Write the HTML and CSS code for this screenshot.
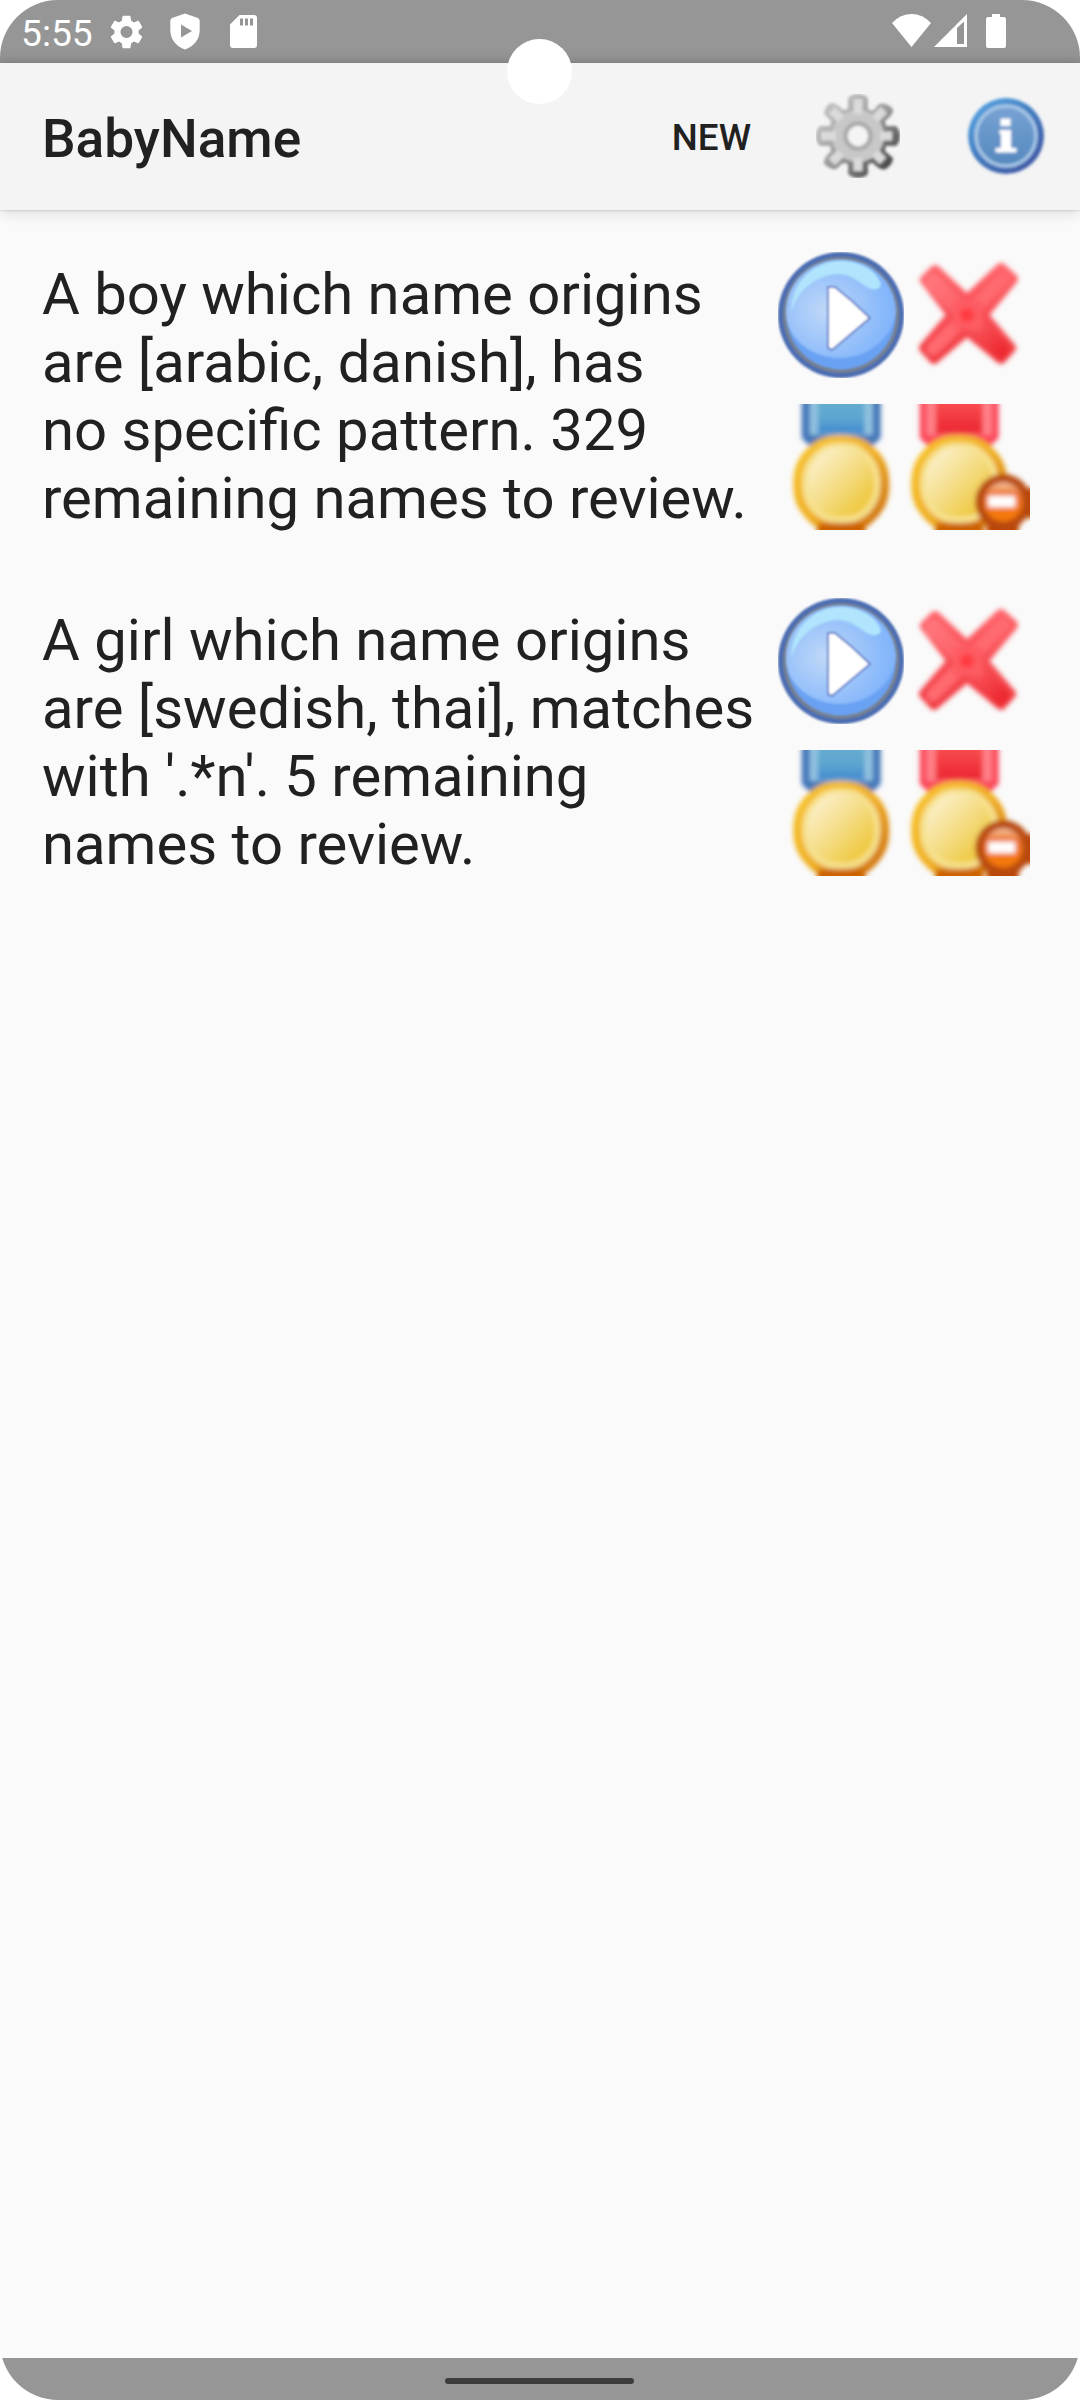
FILE: index.html
```html
<!DOCTYPE html>
<html lang="en">
<head>
<meta charset="utf-8">
<title>BabyName</title>
<link rel="stylesheet" href="styles.css">
</head>
<body>
<svg class="defs" aria-hidden="true">
  <defs>
    <filter id="soft" x="-10%" y="-10%" width="120%" height="120%"><feGaussianBlur stdDeviation="2.400"/></filter>
    <filter id="soft-xs" x="-10%" y="-10%" width="120%" height="120%"><feGaussianBlur stdDeviation="0.8"/></filter>
    <filter id="soft-s" x="-10%" y="-10%" width="120%" height="120%"><feGaussianBlur stdDeviation="1.4"/></filter>
    <radialGradient id="playFill" cx="0.36" cy="0.52" r="0.6"><stop offset="0" stop-color="#bfd8f8"/><stop offset="1" stop-color="#82b5fb"/></radialGradient>
    <linearGradient id="crossFill" x1="0" y1="0" x2="1" y2="1"><stop offset="0" stop-color="#ff747a"/><stop offset="0.6" stop-color="#fb5a60"/><stop offset="1" stop-color="#ee2b33"/></linearGradient>
    <linearGradient id="crossEdge" gradientUnits="userSpaceOnUse" x1="63" y1="10" x2="63" y2="116"><stop offset="0" stop-color="#ff666c"/><stop offset="1" stop-color="#f0363d"/></linearGradient>
    <linearGradient id="goldEdge" x1="0" y1="0" x2="1" y2="1"><stop offset="0" stop-color="#f8c52a"/><stop offset="0.5" stop-color="#f0b020"/><stop offset="0.78" stop-color="#d98410"/><stop offset="1" stop-color="#c65a00"/></linearGradient>
    <linearGradient id="goldFill" x1="0" y1="0" x2="1" y2="1"><stop offset="0.1" stop-color="#fbf0cc"/><stop offset="0.5" stop-color="#f4dc84"/><stop offset="0.8" stop-color="#f0cb48"/></linearGradient>
    <linearGradient id="blueRibbon" x1="0" y1="0" x2="0" y2="1"><stop offset="0" stop-color="#68aed0"/><stop offset="0.6" stop-color="#5ca5d0"/><stop offset="1" stop-color="#3f88d0"/></linearGradient>
    <linearGradient id="redRibbon" x1="0" y1="0" x2="0" y2="1"><stop offset="0" stop-color="#fb5555"/><stop offset="1" stop-color="#ec2430"/></linearGradient>
    <linearGradient id="minusFill" x1="0" y1="0" x2="0" y2="1"><stop offset="0" stop-color="#f6c9a4"/><stop offset="0.3" stop-color="#ee7430"/><stop offset="1" stop-color="#f77a00"/></linearGradient>
    <linearGradient id="gearEdge" x1="0" y1="0" x2="1" y2="1"><stop offset="0.1" stop-color="#c4c4c4"/><stop offset="0.5" stop-color="#9c9c9c"/><stop offset="0.85" stop-color="#4c4c4c"/></linearGradient>
    <linearGradient id="infoEdge" x1="0.1" y1="0" x2="0.9" y2="1"><stop offset="0" stop-color="#58a8e4"/><stop offset="0.5" stop-color="#3f78bc"/><stop offset="1" stop-color="#4052a0"/></linearGradient>
    <linearGradient id="infoFill" x1="0" y1="0" x2="0" y2="1"><stop offset="0" stop-color="#78a2d4"/><stop offset="1" stop-color="#5488be"/></linearGradient>

    <symbol id="play" viewBox="0 0 126 126">
      <g filter="url(#soft-xs)">
        <circle cx="63" cy="63" r="63" fill="#4c6db2"/>
        <circle cx="63" cy="63" r="58" fill="#77818e"/>
        <circle cx="63" cy="63" r="54.5" fill="#6aa2f3"/>
        <path d="M63 7.5C32 7.5 8 31 8 60C8 86 33 106 62 106C91 106 117 84 118 58C116 29 93 7.5 63 7.5Z" fill="url(#playFill)"/>
        <path d="M13.500 60C13 31 35 9 63 9C82 9 98 19 102 30C105 36 98 39 91 36C81 31 74 22 60 22C37 23 19 39 13.500 60Z" fill="#b0e5fd"/>
        <path d="M50 35H57Q75 49 92 66L54 98L50 96Z" fill="#fff" stroke="#6580c8" stroke-width="2" stroke-linejoin="round"/>
      </g>
    </symbol>
    <symbol id="cross" viewBox="0 0 126 126">
      <g filter="url(#soft)">
        <g fill="url(#crossEdge)" stroke="url(#crossEdge)" stroke-width="10" stroke-linejoin="round">
          <path d="M21 28L31 18L63 48L97 16L109 27L79 63L107 96L97 107L63 79L30 107L20 96L48 63Z"/>
        </g>
        <path d="M29 30L97 98" stroke="url(#crossFill)" stroke-width="17" stroke-linecap="round"/>
        <path d="M29 97L99 27" stroke="#ff6a70" stroke-width="13" stroke-linecap="round"/>
        <rect x="49" y="49" width="29" height="29" fill="#fd5c62"/>
        <circle cx="63" cy="63" r="7" fill="#ff3b42"/>
      </g>
    </symbol>
    <symbol id="coin" viewBox="0 0 126 126" overflow="visible">
      <path d="M62.500 31C80 31 88 36 97 45C107 55 110.500 66 110.500 80C110.500 95 107 104 97 115C88 124 80 130 62.500 130C45 130 37 124 28 115C18 104 14.500 95 14.500 80C14.500 66 18 55 28 45C37 36 45 31 62.500 31Z" fill="url(#goldEdge)"/>
      <path d="M40 119H85L88 132H37Z" fill="#cc6200"/>
      <path d="M62.500 38.500C76 38.500 82 42 90 50C98 58 101.500 67 101.500 79.500C101.500 92 98 101 90 109C82 116 76 119 62.500 119C49 119 43 116 35 109C27 101 23.500 92 23.500 79.500C23.500 67 27 58 35 50C43 42 49 38.500 62.500 38.500Z" fill="#f7e391"/>
      <path d="M62.500 43C74 43 80 46 86 53C93 60 96 68 96 79C96 91 93 98 86 105C80 111 74 113 62.500 113C51 113 45 111 39 105C32 98 29 91 29 79C29 68 32 60 39 53C45 46 51 43 62.500 43Z" fill="url(#goldFill)"/>
    </symbol>
    <symbol id="medal" viewBox="-0.7 0 126 126">
      <g filter="url(#soft)">
        <path d="M23 -8H102V34L94 42H31L23 34Z" fill="#3f74b8"/>
        <path d="M31 -8H94V31H31Z" fill="#92c3e0"/>
        <path d="M39 -8H86V30H39Z" fill="url(#blueRibbon)"/>
        <use href="#coin" width="126" height="126"/>
      </g>
    </symbol>
    <symbol id="medal-minus" viewBox="-0.7 0 126 126">
      <g filter="url(#soft)">
        <path d="M15 -8H94V34L86 42H23L15 34Z" fill="#fb4a5a"/>
        <path d="M22 -8H87V31H22Z" fill="#ff8088"/>
        <path d="M31 -8H78V30H31Z" fill="url(#redRibbon)"/>
        <use href="#coin" x="-8" width="126" height="126"/>
        <path d="M112 84H136V114H116L112 136H82V116Z" fill="#bd4500"/>
        <circle cx="98.500" cy="98" r="28" fill="#b84a0c"/>
        <circle cx="98.500" cy="98" r="19.500" fill="url(#minusFill)"/>
        <rect x="83.500" y="92" width="27" height="11" fill="#fff"/>
      </g>
    </symbol>
    <symbol id="gear" viewBox="0 0 84 84">
      <g filter="url(#soft-s)">
        <path fill="url(#gearEdge)" d="M32 15V4Q36 0 42 0Q48 0 52 4V15L57 17L63 10Q70 8 77 15Q78 20 69 27L70 32H80Q84 36 84 42Q84 48 80 52H70L69 57L77 64Q77 70 70 75Q64 77 57 69L52 70V80Q48 84 42 84Q36 84 32 80V70L27 69L20 75Q14 76 8 70Q7 64 15 57L14 52H4Q0 48 0 42Q0 36 4 32H14L15 27L8 20Q8 14 14 9Q20 8 27 16Z"/>
        <circle cx="42" cy="42" r="26" fill="#c8c8c8"/>
        <path stroke="#dadada" stroke-width="9" d="M42 5V20M42 64V77M5 42H20M64 42H76M16 16L25 25M59 59L67 67M68 16L59 25M16 68L25 59"/>
        <circle cx="42" cy="42" r="12.500" fill="#f4f4f4" stroke="#aaa" stroke-width="4.500"/>
      </g>
    </symbol>
    <symbol id="info" viewBox="0 0 84 84">
      <g filter="url(#soft-s)">
        <circle cx="42" cy="42" r="38" fill="url(#infoEdge)"/>
        <circle cx="42" cy="42" r="30" fill="url(#infoFill)" stroke="#a6c6e6" stroke-width="3.500"/>
        <path d="M36.500 24.500H46.500V32H36.500ZM35.500 36H47V54H52.500V58.500H31.500V54H37V40H35.500Z" fill="#fff"/>
      </g>
    </symbol>
  </defs>
</svg>

<div class="screen">
  <header class="status-bar">
    <span class="clock">5:55</span>
    <svg class="status-gear" viewBox="2.200 2 19.600 20"><path fill="#fff" d="M19.140 12.940c.04-.3.06-.61.06-.94 0-.32-.02-.64-.07-.94l2.030-1.580c.18-.14.23-.41.12-.61l-1.920-3.320c-.12-.22-.37-.29-.59-.22l-2.390.96c-.5-.38-1.030-.7-1.620-.94L14.400 2.810c-.04-.24-.24-.41-.48-.41h-3.840c-.24 0-.43.17-.47.41L9.250 5.350c-.59.24-1.130.57-1.620.94l-2.390-.96c-.22-.08-.47 0-.59.22L2.740 8.870c-.12.21-.08.47.12.61l2.030 1.580c-.05.3-.09.63-.09.94s.02.64.07.94l-2.030 1.580c-.18.14-.23.41-.12.61l1.920 3.320c.12.22.37.29.59.22l2.390-.96c.5.38 1.030.7 1.620.94l.36 2.540c.05.24.24.41.48.41h3.840c.24 0 .44-.17.47-.41l.36-2.540c.59-.24 1.130-.56 1.620-.94l2.390.96c.22.08.47 0 .59-.22l1.920-3.320c.12-.22.07-.47-.12-.61zM12 15.600a3.600 3.600 0 1 1 0-7.200 3.600 3.600 0 0 1 0 7.200z"/></svg>
    <svg class="status-shield" viewBox="0 0 30 37"><path fill="#fff" fill-rule="evenodd" d="M15 .5L28 5Q29.700 6 29.700 8V17C29.700 27 23 34 15 36.500C7 34 .3 27 .3 17V8Q.3 6 2 5ZM11 11.500V24.500L22 18Z"/></svg>
    <svg class="status-card" viewBox="0 0 27 33"><path fill="#fff" fill-rule="evenodd" d="M9.500 0H24Q27 0 27 3V30Q27 33 24 33H3Q0 33 0 30V9.500ZM10 3.500V10.500H13V3.500ZM15 3.500V10.500H18V3.500ZM20 3.500V10.500H23V3.500Z"/></svg>
    <div class="status-right">
      <svg class="wifi" viewBox="0 0 39 33"><path fill="#fff" d="M19.500 33L0 9Q8.500 0 19.500 0T39 9Z"/></svg>
      <svg class="signal" viewBox="0 0 33 33"><path fill="#fff" fill-rule="evenodd" d="M0 33L33 0V33ZM23 14V30H30V7.500Z"/></svg>
      <svg class="battery" viewBox="0 0 20 34"><path fill="#fff" d="M6 0H14V3H18Q20 3 20 5V32Q20 34 18 34H2Q0 34 0 32V5Q0 3 2 3H6Z"/></svg>
    </div>
  </header>
  <div class="camera"></div>

  <nav class="toolbar">
    <h1 class="title">BabyName</h1>
    <button class="new">NEW</button>
    <svg class="tool-icon"><use href="#gear"/></svg>
    <svg class="tool-icon info"><use href="#info"/></svg>
  </nav>

  <main class="list">
    <section class="item">
      <p class="desc">A boy which name origins<br>are [arabic, danish], has<br>no specific pattern. 329<br>remaining names to review.</p>
      <div class="actions">
        <svg><use href="#play"/></svg><svg><use href="#cross"/></svg>
        <svg><use href="#medal"/></svg><svg><use href="#medal-minus"/></svg>
      </div>
    </section>
    <section class="item">
      <p class="desc">A girl which name origins<br>are [swedish, thai], matches<br>with '.*n'. 5 remaining<br>names to review.</p>
      <div class="actions">
        <svg><use href="#play"/></svg><svg><use href="#cross"/></svg>
        <svg><use href="#medal"/></svg><svg><use href="#medal-minus"/></svg>
      </div>
    </section>
  </main>

  <footer class="nav-bar"><div class="handle"></div></footer>
</div>
</body>
</html>
```
FILE: styles.css
```css
* { box-sizing: border-box; }

body {
  margin: 0;
  background: #fff;
  color: #212121;
  font-family: Roboto, "Liberation Sans", sans-serif;
}

.defs { position: absolute; width: 0; height: 0; }

.screen {
  position: relative;
  display: flex;
  flex-direction: column;
  width: 1080px;
  height: 2400px;
  overflow: hidden;
  border-radius: 58px;
  background: #fafafa;
}

.status-bar {
  display: flex;
  align-items: flex-start;
  height: 63px;
  padding: 0 74px 0 21px;
  background: linear-gradient(#969696 0, #969696 48px, #929292 57px, #888 63px);
}

.clock {
  width: 89px;
  margin-top: 12px;
  color: #fff;
  font-size: 37.2px;
  line-height: 43px;
}

.status-gear { width: 33px; height: 34px; margin-top: 15px; }
.status-shield { width: 30px; height: 37px; margin: 13px 0 0 27px; }
.status-card { width: 27px; height: 33px; margin: 15px 0 0 30px; }

.status-right { display: flex; margin: 14px 0 0 auto; }
.wifi { width: 39px; height: 33px; }
.signal { width: 33px; height: 33px; margin-left: 3px; }
.battery { width: 20px; height: 34px; margin-left: 19px; }

.camera {
  position: absolute;
  z-index: 2;
  left: 507px;
  top: 39px;
  width: 65px;
  height: 65px;
  border-radius: 50%;
  background: #fff;
}

.toolbar {
  display: flex;
  align-items: center;
  height: 147px;
  padding: 0 32px 2px 42px;
  background: #f4f4f4;
  box-shadow: 0 1px 2px rgba(0, 0, 0, .12), 0 4px 14px rgba(0, 0, 0, .1);
}

.title {
  margin: 7px auto 0 0;
  font-size: 53.2px;
  font-weight: 500;
  line-height: 62px;
}

.new {
  margin: 4px 65px 0 0;
  padding: 0;
  border: 0;
  background: none;
  color: inherit;
  font: 500 36.75px/43px Roboto, "Liberation Sans", sans-serif;
}

.tool-icon { width: 84px; height: 84px; }
.tool-icon.info { margin-left: 64px; }

.list {
  display: flex;
  flex: 1;
  flex-direction: column;
  gap: 68px;
  padding: 42px 50px 0 42px;
}

.item { display: flex; justify-content: space-between; height: 278px; }

.desc {
  margin: 8px 0 0;
  font-size: 58px;
  line-height: 68px;
  white-space: nowrap;
}

.actions {
  display: grid;
  grid-template-columns: 126px 126px;
  grid-auto-rows: 126px;
  row-gap: 26px;
}

.actions svg { width: 126px; height: 126px; }

.nav-bar {
  display: flex;
  height: 42px;
  padding: 20px 0 0 445px;
  background: #969696;
}

.handle {
  width: 189px;
  height: 6px;
  border-radius: 3px;
  background: #3c3c3c;
}
```
